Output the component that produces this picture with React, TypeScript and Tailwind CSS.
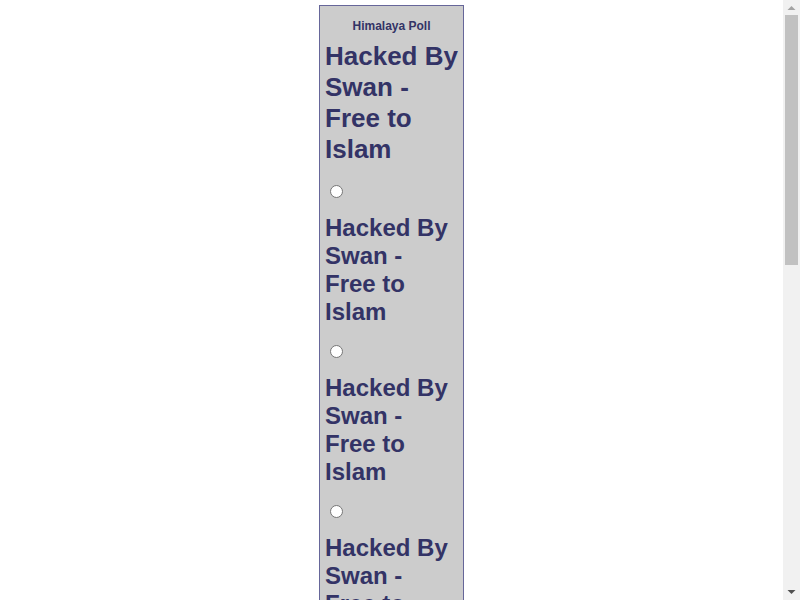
import React from "react";

const Heading = ({ big }: { big?: boolean }) => (
  <div
    className={
      big
        ? "text-[26px] leading-[31px] font-bold whitespace-nowrap"
        : "text-[24px] leading-[28px] font-bold whitespace-nowrap"
    }
  >
    Hacked By
    <br />
    Swan -
    <br />
    Free to
    <br />
    Islam
  </div>
);

const Radio = () => (
  <div className="pl-[5px] flex">
    <span className="block w-[13px] h-[13px] rounded-full bg-white border border-[#767676]" />
  </div>
);

const Scrollbar = () => (
  <div className="w-[17px] h-[600px] bg-[#f1f1f1] flex flex-col shrink-0">
    <div className="h-[15px] flex items-center justify-center">
      <svg width="9" height="6" viewBox="0 0 9 6">
        <polygon points="0.5,5 4.5,1 8.5,5" fill="#a3a3a3" />
      </svg>
    </div>
    <div className="h-[250px] mx-[2px] bg-[#c1c1c1]" />
    <div className="flex-1" />
    <div className="h-[17px] flex items-center justify-center">
      <svg width="9" height="6" viewBox="0 0 9 6">
        <polygon points="0.5,1 8.5,1 4.5,5" fill="#505050" />
      </svg>
    </div>
  </div>
);

export default function App() {
  const items = [0, 1, 2, 3, 4, 5, 6];
  return (
    <div
      className="bg-white h-[600px] flex overflow-hidden"
      style={{ fontFamily: '"Liberation Sans", Arial, sans-serif' }}
    >
      <div className="flex-1 pt-[5px] overflow-hidden">
        <div className="mx-auto w-[145px] border border-[#666699] bg-[#cccccc] text-[#333366] px-[5px] pt-[13px] pb-[60px]">
          <div className="text-[12px] leading-[14px] font-bold text-center">Himalaya Poll</div>
          <div className="mt-[8px]">
            <Heading big />
          </div>
          {items.map((i) => (
            <div key={i}>
              <div className={i === 0 ? "mt-[20px]" : "mt-[19px]"}>
                <Radio />
              </div>
              <div className="mt-[16px]">
                <Heading />
              </div>
            </div>
          ))}
        </div>
      </div>
      <Scrollbar />
    </div>
  );
}
